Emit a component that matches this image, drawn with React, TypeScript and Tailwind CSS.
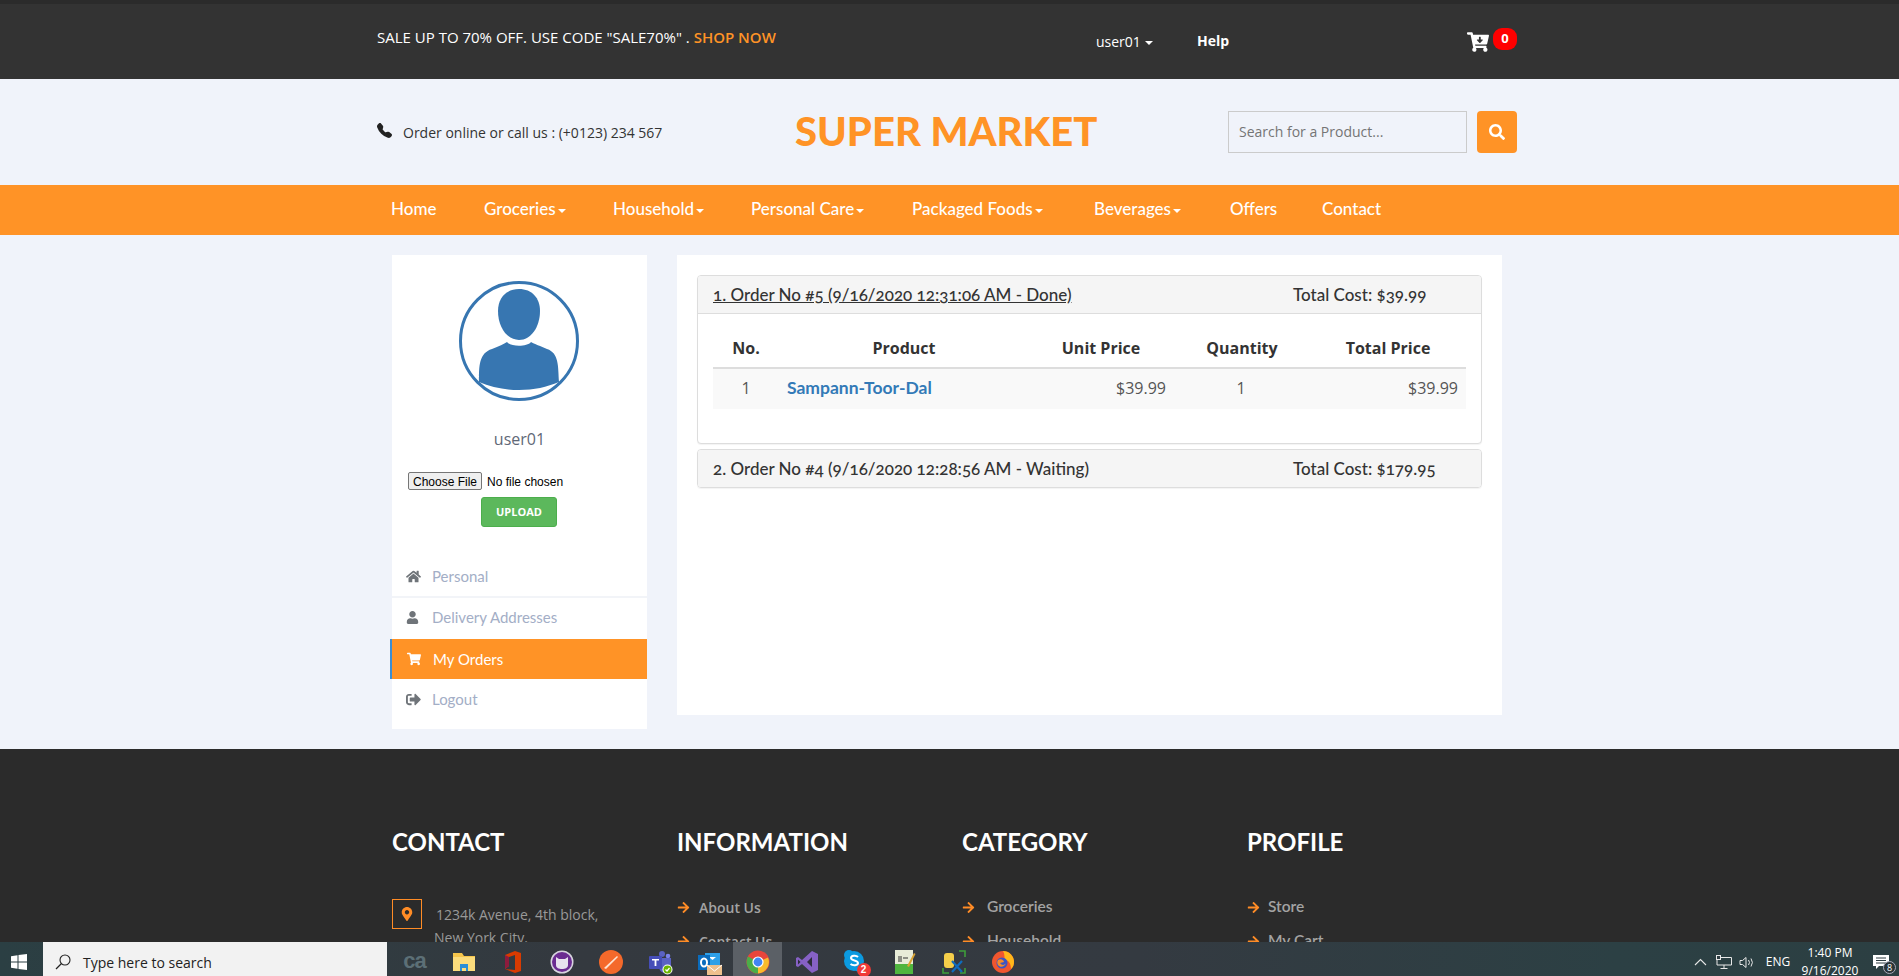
import React from "react";
import { FaCartArrowDown, FaSearch, FaHome, FaUser, FaShoppingCart, FaSignOutAlt, FaArrowRight, FaMapMarkerAlt } from "react-icons/fa";
import { BsTelephoneFill } from "react-icons/bs";

const caret = <span className="inline-block w-0 h-0 ml-[2px] align-middle border-t-[4px] border-x-[4px] border-x-transparent border-t-white" />;

const nav: [string, boolean, string][] = [
  ["Home", false, "w-[93px]"],
  ["Groceries", true, "w-[129px]"],
  ["Household", true, "w-[138px]"],
  ["Personal Care", true, "w-[161px]"],
  ["Packaged Foods", true, "w-[182px]"],
  ["Beverages", true, "w-[136px]"],
  ["Offers", false, "w-[92px]"],
  ["Contact", false, "w-[100px]"],
];

const RALE = "font-['Lato','Liberation_Sans',sans-serif]";
const OPEN = "font-['Open_Sans','Liberation_Sans',sans-serif]";

function Avatar() {
  return (
    <svg viewBox="0 0 120 120" className="w-[120px] h-[120px]">
      <circle cx="60" cy="60" r="58.5" fill="none" stroke="#3776b1" strokeWidth="3" />
      <path d="M60 8C47 8 39 17 39 30C39 46 48 59 60 59C72 59 81 46 81 30C81 17 73 8 60 8Z" fill="#3776b1" />
      <path d="M20 101C20 85 20 72 33 68C40 65 45 63 48 61C52 66 68 66 72 61C75 63 82 65 88 68C100 72 99 85 100 101C88 106 75 109 60 109C45 109 32 106 20 101Z" fill="#3776b1" />
    </svg>
  );
}

function Side({ icon, label, active, h }: { icon: React.ReactNode; label: string; active?: boolean; h: string }) {
  return (
    <div className={`flex items-center ${h} text-[15px] ${RALE} ${active ? "-ml-[2px] pl-[15px] border-l-2 border-[#3c8dd0] bg-[#ff9326] text-white" : "pl-[14px] text-[#a3aec6]"}`}>
      <span className={`w-[26px] text-[15px] ${active ? "text-white" : "text-[#6f7479]"}`}>{icon}</span>
      {label}
    </div>
  );
}

function FootCol({ title, items, gap, bold }: { title: string; items: string[]; gap: string; bold?: boolean }) {
  return (
    <div className="w-[285px] shrink-0">
      <h3 className={`${RALE} font-bold text-[24px] text-white leading-[30px] mb-[33px]`}>{title}</h3>
      {items.map((t) => (
        <div key={t} className={`flex items-center h-[34px] font-semibold text-[#a3a3a3] ${bold ? `${OPEN} text-[14px]` : `${RALE} text-[15.5px]`}`}>
          <FaArrowRight className={`text-[#ff8c26] text-[13px] shrink-0 ${gap}`} />
          {t}
        </div>
      ))}
    </div>
  );
}

function OrderHead({ left, right, underline, border }: { left: string; right: string; underline?: boolean; border?: boolean }) {
  return (
    <div className={`flex items-center h-[38px] bg-[#f5f5f5] pl-[15px] text-[17px] font-medium text-[#333] ${RALE} [font-variant-numeric:oldstyle-nums] ${border ? "border-b border-[#ddd]" : ""}`}>
      <span className={`w-[580px] ${underline ? "underline" : ""}`}>{left}</span>
      <span>{right}</span>
    </div>
  );
}

const Tile = ({ children, active }: { children: React.ReactNode; active?: boolean }) => (
  <div className={`w-[49px] h-full pt-[6px] flex items-center justify-center shrink-0 ${active ? "bg-[#5b6066]" : ""}`}>{children}</div>
);

function TaskIcons() {
  return (
    <div className="flex h-full ml-[3px]">
      <Tile>
        <span className="font-['Liberation_Sans',sans-serif] font-bold text-[22px] leading-[22px] tracking-[-1px] text-[#5c6f76] -mt-[3px]">ca</span>
      </Tile>
      <Tile>
        <svg width="22" height="20" viewBox="0 0 22 20"><path d="M0 1h9l2 3h11v15H0z" fill="#f5c54b" /><path d="M0 5h22v14H0z" fill="#fbdc7c" /><path d="M7 12h8v7h-2v-3H9v3H7z" fill="#2a8ed6" /></svg>
      </Tile>
      <Tile>
        <svg width="18" height="24" viewBox="0 0 18 24"><path d="M1 5L11 1l6 2v18l-6 2L1 19l10 1V5L5 7v9l-4 3z" fill="#d83b01" /><path d="M1 5l4 2v9l-4 3z" fill="#8e1b3d" /></svg>
      </Tile>
      <Tile>
        <svg width="24" height="24" viewBox="0 0 24 24"><circle cx="12" cy="12" r="11.5" fill="#d8d4e0" /><circle cx="12" cy="12" r="10" fill="#6b2c91" /><path d="M6 7l3 2h6l3-2v8c0 3-3 4-6 4s-6-1-6-4z" fill="#e8e2ee" /></svg>
      </Tile>
      <Tile>
        <svg width="24" height="24" viewBox="0 0 24 24"><circle cx="12" cy="12" r="12" fill="#f4692b" /><path d="M5 18L18 6l1 1L7 19z" fill="#fde3d2" /></svg>
      </Tile>
      <Tile>
        <svg width="26" height="26" viewBox="0 0 26 26"><circle cx="15" cy="5" r="3" fill="#5a62c4" /><circle cx="21" cy="7" r="2.3" fill="#7b83eb" /><path d="M11 9h13v9a6 6 0 0 1-12 0z" fill="#5a62c4" /><rect x="2" y="7" width="13" height="13" rx="1" fill="#464eb8" /><path d="M5 10h7v1.6H9.4V17H7.6v-5.4H5z" fill="#fff" /><circle cx="20.5" cy="20.5" r="5" fill="#fff" /><circle cx="20.5" cy="20.5" r="4" fill="#6bb700" /><path d="M18.5 20.5l1.5 1.5 2.5-3" stroke="#fff" strokeWidth="1.2" fill="none" /></svg>
      </Tile>
      <Tile>
        <svg width="26" height="26" viewBox="0 0 26 26"><path d="M9 4h15v12H9z" fill="#2ea0e8" /><path d="M13 8h7l-3.500 3z" fill="#fff" /><rect x="2" y="6" width="12" height="15" fill="#0a6cbd" /><ellipse cx="8" cy="13.500" rx="3" ry="4" fill="none" stroke="#fff" strokeWidth="2" /><rect x="11" y="16" width="15" height="10" fill="#eec08d" /><path d="M11 16l7.500 6 7.500-6" stroke="#fff" strokeWidth="1" fill="none" /></svg>
      </Tile>
      <Tile active>
        <svg width="24" height="24" viewBox="0 0 24 24"><circle cx="12" cy="12" r="11.500" fill="#e8453c" /><path d="M12 12L22 7.500A11.500 11.500 0 0 1 12 23.500z" fill="#f9bb2d" /><path d="M12 12L12 23.500A11.500 11.500 0 0 1 2 6.500z" fill="#4aae48" /><circle cx="12" cy="12" r="5.600" fill="#fff" /><circle cx="12" cy="12" r="4.400" fill="#4285f4" /></svg>
      </Tile>
      <Tile>
        <svg width="24" height="24" viewBox="0 0 24 24"><path d="M17 1l6 3v16l-6 3L7 14l-4 3-2-1V8l2-1 4 3z" fill="#8661c5" /><path d="M17 7l-5 5 5 5z" fill="#2d2d3a" /><path d="M3 9.500L5.500 12 3 14.500z" fill="#2d2d3a" /></svg>
      </Tile>
      <Tile>
        <div className="relative w-[26px] h-[26px]">
          <svg width="22" height="24" viewBox="0 0 22 24" className="absolute left-0 top-0"><circle cx="11" cy="12" r="10" fill="#0b9ae0" /><circle cx="6" cy="6" r="5" fill="#0b9ae0" /><circle cx="16" cy="18" r="5" fill="#0b9ae0" /><path d="M15 8c-2-2-7-1.500-7 1 0 3 7 2 7 5 0 2.500-5 3-7.500 1" fill="none" stroke="#fff" strokeWidth="2" /></svg>
          <span className="absolute right-[-2px] bottom-[-2px] w-[14px] h-[14px] rounded-full bg-[#f03a36] text-white text-[10px] font-bold leading-[14px] text-center font-['Liberation_Sans',sans-serif]">2</span>
        </div>
      </Tile>
      <Tile>
        <svg width="22" height="26" viewBox="0 0 22 26"><rect x="1" y="1" width="18" height="24" fill="#e8ecd8" /><rect x="1" y="15" width="18" height="10" fill="#4fb53e" /><path d="M5 7v6M7 7v6M9 9h5" stroke="#333" strokeWidth="1" /><path d="M13 17L20 4l1.500 1L15 18z" fill="#d8a233" /></svg>
      </Tile>
      <Tile>
        <svg width="24" height="24" viewBox="0 0 24 24"><rect x="2" y="3" width="10" height="15" rx="3" fill="#f5cf4a" /><path d="M17 1h6v6M1 18v5h6M23 18v5h-5" stroke="#3e9e3a" strokeWidth="1.600" fill="none" /><path d="M10 22L20 11M20 22L10 11" stroke="#0f6cbd" strokeWidth="2.200" /></svg>
      </Tile>
      <Tile>
        <svg width="24" height="24" viewBox="0 0 24 24"><circle cx="12" cy="12" r="11" fill="#f0562f" /><path d="M12 1a11 11 0 0 1 11 11c0 3-1 5-3 7 0-6-3-9-6-9-1-3 0-6-2-9z" fill="#ffb71a" /><circle cx="11" cy="13" r="5.500" fill="#3a55c4" /><path d="M7 10c3-2 6 0 6 2l-4 1c2 3 5 2 6 0-1 4-6 5-8 2-1-2-1-3 0-5z" fill="#f58a2a" /></svg>
      </Tile>
    </div>
  );
}

function Tray() {
  return (
    <div className="flex items-center h-full pt-[6px] ml-auto text-white font-['Open_Sans',sans-serif] relative">
      <svg width="13" height="8" viewBox="0 0 13 8" className="mr-[9px]"><path d="M1 7l5.500-5.500L12 7" stroke="#e8e8e8" strokeWidth="1.100" fill="none" /></svg>
      <svg width="16" height="14" viewBox="0 0 16 14" className="mr-[7px]"><path d="M4 2.500h11.500v7.500H1V4M8 10v3M4.500 13.500h7" stroke="#e8e8e8" strokeWidth="1" fill="none" /><rect x="0.500" y="0.500" width="4" height="4" fill="#2f3d42" stroke="#e8e8e8" /></svg>
      <svg width="16" height="13" viewBox="0 0 16 13" className="mr-[6px]"><path d="M1 4.500h2.500L7 1.500v10L3.500 8.500H1zM9.500 4a4 4 0 0 1 0 5M12 2.500a7 7 0 0 1 0 8" stroke="#e8e8e8" strokeWidth="1" fill="none" /></svg>
      <span className="text-[12px] w-[34px] text-center mr-[4px]">ENG</span>
      <div className="w-[62px] text-center text-[12px] leading-[18px] whitespace-nowrap">
        <div>1:40 PM</div>
        <div>9/16/2020</div>
      </div>
      <div className="relative w-[36px] h-full flex items-center justify-center ml-[2px]">
        <svg width="16" height="14" viewBox="0 0 16 14"><path d="M0 0h16v11H6l-3 3v-3H0z" fill="#fff" /><path d="M3 3h10M3 5.500h10M3 8h10" stroke="#2f3d42" strokeWidth="1" /></svg>
        <span className="absolute right-[3px] bottom-[2px] w-[13px] h-[13px] rounded-full bg-[#2a3438] border border-[#aab] text-[9px] leading-[11px] text-center">8</span>
      </div>
    </div>
  );
}

export default function App() {
  return (
    <div className={`h-[976px] flex flex-col overflow-hidden bg-[#f0f3fa] ${OPEN}`}>
      <div className="flex-1 min-h-0 overflow-hidden">
        {/* Top bar */}
        <div className="h-[79px] bg-[#333333] border-t-[4px] border-[#2b2b2b]">
          <div className="w-[1170px] ml-[362px] px-[15px] flex items-start text-white">
            <div className="w-[719px] mt-[23px] text-[15px] leading-[20px] whitespace-nowrap">
              SALE UP TO 70% OFF. USE CODE "SALE70%" . <span className="text-[#ff9326] font-semibold">SHOP NOW</span>
            </div>
            <div className="w-[101px] mt-[28px] text-[14px] leading-[20px]">user01 <span className="inline-block w-0 h-0 align-middle border-t-[4px] border-x-[4px] border-x-transparent border-t-white" /></div>
            <div className="w-[270px] mt-[27px] text-[14px] leading-[20px] font-bold">Help</div>
            <div className="flex items-start mt-[24px]">
              <FaCartArrowDown className="text-[22px] mt-[3px] mr-[4px]" />
              <span className="w-[24px] h-[22px] rounded-[9px] bg-[#ff0000] text-white text-[13px] font-bold flex items-center justify-center">0</span>
            </div>
          </div>
        </div>

        {/* Header */}
        <div className="h-[106px] w-[1170px] ml-[362px] px-[15px] flex items-center">
          <div className="w-[418px] flex items-center text-[14px] text-[#333]">
            <BsTelephoneFill className="text-[15px] text-[#222] mr-[11px] -mt-[4px]" />
            Order online or call us : (+0123) 234 567
          </div>
          <div className={`w-[433px] text-[40px] font-black text-[#ff9326] leading-none whitespace-nowrap -mt-[2px] ${RALE}`}>SUPER MARKET</div>
          <div className="w-[239px] h-[42px] border border-[#cbcbcb] flex items-center px-[10px] pb-[2px] text-[14px] text-[#757575]">Search for a Product...</div>
          <div className="ml-[10px] w-[40px] h-[42px] rounded-[4px] bg-[#ff9326] flex items-center justify-center text-white text-[16px]"><FaSearch /></div>
        </div>

        {/* Nav */}
        <div className="h-[50px] bg-[#ff9326]">
          <div className={`w-[1170px] ml-[362px] pl-[29px] h-full flex items-center text-[17px] font-medium text-white pb-[2px] ${RALE}`}>
            {nav.map(([t, c, w]) => (
              <div key={t} className={`${w} whitespace-nowrap`}>{t}{c && caret}</div>
            ))}
          </div>
        </div>

        {/* Content */}
        <div className="w-[1170px] ml-[362px] px-[30px] pt-[20px] pb-[20px] flex items-start gap-[30px] h-[514px]">
          <div className="w-[255px] h-[474px] bg-white shrink-0 flex flex-col">
            <div className="flex justify-center mt-[26px] pr-[2px]"><Avatar /></div>
            <div className="text-center text-[16px] leading-[22px] text-[#5f6877] mt-[27px]">user01</div>
            <input type="file" className="block ml-[16px] mt-[22px] w-[230px] h-[18px] text-[12px] font-['Liberation_Sans',sans-serif] text-black file:mr-[5px] file:h-[18px] file:px-[4px] file:bg-[#efefef] file:border file:border-[#767676] file:rounded-[2px] file:text-[12px] file:text-black" />
            <div className="ml-[89px] mt-[7px] w-[76px] h-[30px] rounded-[3px] bg-[#5cb85c] border border-[#4cae4c] flex items-center justify-center text-white text-[11px] font-bold">UPLOAD</div>
            <div className="mt-[30px]">
              <div className="border-b-2 border-[#f2f4f8]">
                <Side icon={<FaHome />} label="Personal" h="h-[39px]" />
              </div>
              <Side icon={<FaUser className="text-[13px]" />} label="Delivery Addresses" h="h-[40px] pb-[1px] mb-[1px]" />
              <Side icon={<FaShoppingCart className="text-[14px]" />} label="My Orders" active h="h-[40px]" />
              <Side icon={<FaSignOutAlt />} label="Logout" h="h-[40px]" />
            </div>
          </div>

          <div className="w-[825px] h-[460px] bg-white px-[20px] pt-[20px]">
            <div className="h-[169px] bg-white border border-[#ddd] rounded-[4px] overflow-hidden shadow-[0_1px_1px_rgba(0,0,0,0.05)]">
              <OrderHead left="1. Order No #5 (9/16/2020 12:31:06 AM - Done)" right="Total Cost: $39.99" underline border />
              <div className="px-[15px] pt-[15px]">
                <div className="flex items-center h-[40px] border-b-2 border-[#ddd] text-[16px] font-bold text-[#333] text-center">
                  <div className="w-[66px]">No.</div>
                  <div className="w-[250px]">Product</div>
                  <div className="w-[144px]">Unit Price</div>
                  <div className="w-[138px]">Quantity</div>
                  <div className="w-[154px]">Total Price</div>
                </div>
                <div className="flex items-center h-[40px] pb-[2px] bg-[#f9f9f9] text-[16px] text-[#555]">
                  <div className="w-[66px] text-center">1</div>
                  <div className={`w-[251px] pl-[8px] text-[17.5px] font-bold text-[#337ab7] ${RALE}`}>Sampann-Toor-Dal</div>
                  <div className="w-[142px] text-right pr-[6px]">$39.99</div>
                  <div className="w-[138px] text-center">1</div>
                  <div className="w-[156px] text-right pr-[8px]">$39.99</div>
                </div>
              </div>
            </div>
            <div className="mt-[5px] h-[39px] border border-[#ddd] rounded-[4px] overflow-hidden shadow-[0_1px_1px_rgba(0,0,0,0.05)]">
              <OrderHead left="2. Order No #4 (9/16/2020 12:28:56 AM - Waiting)" right="Total Cost: $179.95" />
            </div>
          </div>
        </div>

        {/* Footer */}
        <div className="h-[400px] bg-[#2b2b2b] pt-[78px]">
          <div className="w-[1170px] ml-[362px] px-[30px] flex">
            <div className="w-[285px] shrink-0">
              <h3 className={`${RALE} font-bold text-[24px] text-white leading-[30px] mb-[42px]`}>CONTACT</h3>
              <div className="flex text-[14px] text-[#999] leading-[23px]">
                <div className="w-[30px] h-[30px] border border-[#ff8c26] flex items-center justify-center text-[#ff8c26] text-[14px] shrink-0"><FaMapMarkerAlt /></div>
                <div className="ml-[12px] mt-[4px]">
                  <div className="ml-[2px]">1234k Avenue, 4th block,</div>
                  <div>New York City.</div>
                </div>
              </div>
            </div>
            <FootCol title="INFORMATION" items={["About Us", "Contact Us"]} gap="mr-[9px]" bold />
            <FootCol title="CATEGORY" items={["Groceries", "Household"]} gap="mr-[12px]" />
            <FootCol title="PROFILE" items={["Store", "My Cart"]} gap="mr-[8px]" />
          </div>
        </div>
      </div>

      {/* Taskbar */}
      <div className="h-[34px] shrink-0 flex items-stretch bg-[linear-gradient(90deg,#2b3f43_0%,#34393f_30%,#343a41_60%,#2c4044_85%,#2c3f42_100%)]">
        <div className="w-[43px] pt-[6px] flex items-center justify-center pr-[5px]">
          <svg width="16" height="16" viewBox="0 0 16 16"><path d="M0 2.300l6.500-1v6.200H0zM7.500 1.100L16 0v7.500H7.500zM0 8.500h6.500v6.200l-6.500-1zM7.500 8.500H16V16l-8.500-1.100z" fill="#fff" /></svg>
        </div>
        <div className="w-[344px] pt-[6px] bg-[#f2f2f2] flex items-center pl-[12px] text-[14px] text-[#222]">
          <svg width="16" height="16" viewBox="0 0 16 16" className="mr-[12px]"><circle cx="10" cy="6" r="5" fill="none" stroke="#222" strokeWidth="1.100" /><path d="M6.500 9.500L1 15" stroke="#222" strokeWidth="1.200" /></svg>
          Type here to search
        </div>
        <TaskIcons />
        <Tray />
      </div>
    </div>
  );
}
